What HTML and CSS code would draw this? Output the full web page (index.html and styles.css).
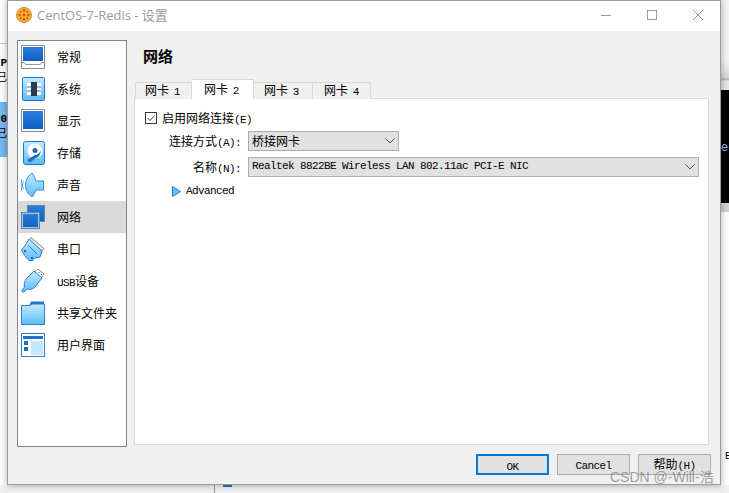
FILE: index.html
```html
<!DOCTYPE html>
<html lang="en">
<head>
  <meta charset="UTF-8">
  <title>CentOS-7-Redis - 设置</title>
  <link rel="stylesheet" href="styles.css">
</head>
<body>

  <svg class="defs" width="0" height="0">
    <defs>
      <linearGradient id="pale" x1="0" y1="0" x2="0" y2="1">
        <stop offset="0" stop-color="#c4eaff"/>
        <stop offset="1" stop-color="#5cbcf8"/>
      </linearGradient>
      <linearGradient id="deep" x1="0" y1="0" x2="0" y2="1">
        <stop offset="0" stop-color="#2a7fdc"/>
        <stop offset="1" stop-color="#0f5fc4"/>
      </linearGradient>
    </defs>
  </svg>

  <!-- what shows behind the dialog -->
  <div class="back back-top"></div>
  <div class="back back-list">
    <b>P</b>
    <span>已</span>
  </div>
  <div class="back back-sel">
    <b>0</b>
    <span>已</span>
  </div>
  <div class="back back-right"></div>
  <div class="back back-term">ec</div>
  <div class="back back-e">E</div>
  <div class="back back-bottom"><i></i></div>

  <div class="window">
    <header class="titlebar">
      <svg class="app-icon" width="16" height="16" viewBox="0 0 16 16">
        <circle cx="8" cy="8" r="7.5" fill="#f8b133" stroke="#d9822b"/>
        <g fill="#c8501e">
          <circle cx="8" cy="3.5" r="1.2"/><circle cx="8" cy="12.5" r="1.2"/>
          <circle cx="3.5" cy="8" r="1.2"/><circle cx="12.5" cy="8" r="1.2"/>
          <circle cx="8" cy="8" r="1.4"/>
          <circle cx="4.8" cy="4.8" r="1"/><circle cx="11.2" cy="4.8" r="1"/>
          <circle cx="4.8" cy="11.2" r="1"/><circle cx="11.2" cy="11.2" r="1"/>
        </g>
      </svg>
      <span class="title">CentOS-7-Redis - 设置</span>
      <div class="controls">
        <svg width="12" height="12" viewBox="0 0 12 12"><path d="M1 6.5h10" stroke="#999" fill="none"/></svg>
        <svg width="12" height="12" viewBox="0 0 12 12"><rect x="1.5" y="1.5" width="9" height="9" stroke="#999" fill="none"/></svg>
        <svg width="12" height="12" viewBox="0 0 12 12"><path d="M1 1l10 10M11 1L1 11" stroke="#999" fill="none"/></svg>
      </div>
    </header>

    <div class="main">
      <ul class="sidebar">
        <li class="item">
          <svg class="icon" width="24" height="24" viewBox="0 0 24 24">
            <path d="M.5.5h23v17l0 6H.5z" fill="#fff" stroke="#8a8a8a"/>
            <rect x="2" y="2" width="20" height="14" fill="url(#deep)"/>
            <path d="M.5 17.5h3l1 2h15l1-2h3" fill="none" stroke="#9a9a9a"/>
          </svg>
          <span>常规</span>
        </li>
        <li class="item">
          <svg class="icon" width="24" height="24" viewBox="0 0 24 24">
            <rect x="1.5" y=".5" width="22" height="23" rx="1" fill="url(#pale)" stroke="#1f74cc"/>
            <rect x="6" y="6" width="14" height="12" fill="#fff"/>
            <path d="M6 10h14M6 14h14" stroke="#2a7fdc"/>
            <rect x="10" y="5" width="6" height="14" fill="#2c3a4d"/>
          </svg>
          <span>系统</span>
        </li>
        <li class="item">
          <svg class="icon" width="24" height="24" viewBox="0 0 24 24">
            <path d="M.5.5h23v22H.5z" fill="#fff" stroke="#8a8a8a"/>
            <rect x="2" y="2" width="20" height="18" fill="url(#deep)"/>
          </svg>
          <span>显示</span>
        </li>
        <li class="item">
          <svg class="icon" width="24" height="24" viewBox="0 0 24 24">
            <rect x="2.5" y=".5" width="21" height="23" rx="2" fill="url(#pale)" stroke="#1f74cc"/>
            <circle cx="14" cy="10" r="7.5" fill="#fff"/>
            <circle cx="14" cy="9.5" r="2.5" fill="#2266b5"/>
            <path d="M6 19l8-5c3-.5 5-2 6-5-.5 5-2.500 7.500-6 8.500l-5 4z" fill="#1f6cc4"/>
          </svg>
          <span>存储</span>
        </li>
        <li class="item">
          <svg class="icon" width="24" height="26" viewBox="0 0 24 26">
            <path d="M2.500 9.500c-1.500 2.500-1.500 5 0 7.500M.8 7.500c-1 4-1 7 0 11" fill="none" stroke="#3a94e6"/>
            <path d="M11 1C7 4 4.500 8 4.500 13S7 22 11 25c1.500-2 3-4 4-7h7.500V9H15c-1-3-2.500-6-4-8z" fill="url(#pale)" stroke="#2a8ae0"/>
          </svg>
          <span>声音</span>
        </li>
        <li class="item active">
          <svg class="icon" width="24" height="24" viewBox="0 0 24 24">
            <rect x="6.500" y=".5" width="17" height="16" fill="url(#deep)" stroke="#5b86ad"/>
            <rect x=".5" y="7.500" width="18" height="16" fill="url(#deep)" stroke="#5b86ad"/>
            <rect x="1.500" y="8.500" width="16" height="14" fill="none" stroke="#a9c8e6"/>
          </svg>
          <span>网络</span>
        </li>
        <li class="item">
          <svg class="icon" width="24" height="24" viewBox="0 0 24 24">
            <path d="M10 .5l13 11-2 2.500L8 3z" fill="#e8e8e8" stroke="#8a8a8a"/>
            <path d="M8 2l13 12-2 6-4 1c-1.500 0-2.500 1-3 2.500H8C6.500 22 5 20 3.500 18.500L.5 13C3 10 6 6 8 2z" fill="url(#pale)" stroke="#2a82da"/>
            <path d="M7 8l9 9" stroke="#2a82da"/>
            <circle cx="4" cy="14" r="1.200" fill="#1f6cc4"/><circle cx="11" cy="21" r="1.200" fill="#1f6cc4"/>
          </svg>
          <span>串口</span>
        </li>
        <li class="item">
          <svg class="icon" width="24" height="24" viewBox="0 0 24 24">
            <path d="M14 3l3-3 6 5-3 4z" fill="#fff" stroke="#8a8a8a"/>
            <path d="M17.500 3l1 1M20 5l1 1" stroke="#555"/>
            <path d="M13 2l8 7-7 9c-2 2-5 3-8 2l-3 3H1.500L.8 21.500 3.500 18C3 15 3.500 12 5 10z" fill="url(#pale)" stroke="#2a82da"/>
          </svg>
          <span><span class="lat">USB</span>设备</span>
        </li>
        <li class="item">
          <svg class="icon" width="24" height="24" viewBox="0 0 24 24">
            <path d="M10 .5h13v5H8z" fill="#2272cc"/>
            <path d="M.5 4.500H9l2-1.500h12.500v20.500H.5z" fill="url(#pale)" stroke="#2a82da"/>
          </svg>
          <span>共享文件夹</span>
        </li>
        <li class="item">
          <svg class="icon" width="24" height="24" viewBox="0 0 24 24">
            <rect x=".5" y=".5" width="23" height="23" fill="#fff" stroke="#2a82da"/>
            <rect x="2" y="3" width="20" height="3" fill="#2272cc"/>
            <rect x="3" y="8" width="4" height="4" fill="#1f6cc4"/>
            <rect x="3" y="14" width="4" height="4" fill="#1f6cc4"/>
            <rect x="10" y="8" width="12" height="14" fill="#c4e8fb"/>
          </svg>
          <span>用户界面</span>
        </li>
      </ul>

      <section class="pane">
        <h1 class="heading">网络</h1>
        <div class="tabs">
          <div class="tab t1">网卡 <span class="lat">1</span></div>
          <div class="tab t2 selected">网卡 <span class="lat">2</span></div>
          <div class="tab t3">网卡 <span class="lat">3</span></div>
          <div class="tab t4">网卡 <span class="lat">4</span></div>
        </div>
        <div class="panel">
          <label class="check">
            <svg width="12" height="12" viewBox="0 0 12 12">
              <rect x=".5" y=".5" width="11" height="11" fill="#fff" stroke="#333"/>
              <path d="M2.500 6l2.500 2.500 4.500-5" fill="none" stroke="#444"/>
            </svg>
            <span>启用网络连接<span class="lat">(E)</span></span>
          </label>
          <div class="fields">
            <span class="field-label">连接方式<span class="lat">(A):</span></span>
            <div class="combo short">
              <span>桥接网卡</span>
              <svg width="10" height="6" viewBox="0 0 10 6"><path d="M.5.500L5 5 9.500.5" fill="none" stroke="#555"/></svg>
            </div>
            <span class="field-label">名称<span class="lat">(N):</span></span>
            <div class="combo">
              <span class="lat">Realtek 8822BE Wireless LAN 802.11ac PCI-E NIC</span>
              <svg width="10" height="6" viewBox="0 0 10 6"><path d="M.5.500L5 5 9.500.5" fill="none" stroke="#555"/></svg>
            </div>
          </div>
          <div class="advanced">
            <svg width="9" height="11" viewBox="0 0 9 11"><path d="M.5.500l8 5-8 5z" fill="#6cc0f5" stroke="#1f7cd6"/></svg>
            <span class="lat">Advanced</span>
          </div>
        </div>
      </section>
    </div>

    <footer class="buttons">
      <button class="btn primary"><span class="lat">OK</span></button>
      <button class="btn"><span class="lat">Cancel</span></button>
      <button class="btn">帮助<span class="lat">(H)</span></button>
    </footer>
  </div>

  <div class="watermark">CSDN @-Will-浩</div>

</body>
</html>
```

FILE: styles.css
```css
* {
  box-sizing: border-box;
}
html, body {
  margin: 0;
  height: 100%;
}
body {
  position: relative;
  width: 729px;
  height: 493px;
  overflow: hidden;
  background-color: #fff;
  color: #000;
  font-family: "Noto Sans CJK SC", sans-serif;
  font-size: 12px;
}
.defs {
  position: absolute;
}
.lat {
  font-family: "Liberation Mono", monospace;
  font-size: 11px;
  letter-spacing: -0.6px;
}

/* behind the dialog */
.back {
  position: absolute;
  overflow: hidden;
}
.back-top {
  left: 0;
  top: 43px;
  width: 7px;
  height: 1px;
  background-color: #ccc;
}
.back-list, .back-sel {
  left: 0;
  width: 7px;
  font-size: 11px;
  line-height: 15px;
  display: flex;
  flex-direction: column;
  align-items: flex-end;
  font-family: "Liberation Mono", "Noto Sans CJK SC", monospace;
  white-space: nowrap;
}
.back-list {
  top: 56px;
  height: 30px;
}
.back-sel {
  top: 102px;
  height: 55px;
  padding-top: 10px;
  background-color: #7ab9f0;
}
.back-right {
  right: 0;
  top: 0;
  width: 8px;
  height: 212px;
  background: linear-gradient(180deg, #f4f4f4 0, #f4f4f4 60px, #d8d8d8 78px, #aaa 79px, #e6e6e6 81px, #e6e6e6 90px, #000 90px, #000 203px, #d2d2d2 203px, #d2d2d2 212px);
}
.back-term {
  right: 0;
  top: 141px;
  width: 8px;
  color: #9ccaf5;
  font-family: "Liberation Mono", monospace;
  font-size: 12px;
  line-height: 14px;
  white-space: nowrap;
}
.back-e {
  right: 0;
  top: 451px;
  width: 4px;
  font-family: "Liberation Mono", monospace;
  font-size: 10px;
  line-height: 12px;
  overflow: hidden;
}
.back-bottom {
  left: 0;
  right: 0;
  top: 485px;
  height: 8px;
  background-color: #f0f0f0;
  > i {
    position: absolute;
    left: 214px;
    top: 0;
    width: 1px;
    height: 8px;
    background-color: #999;
  }
}
.back-bottom::after {
  content: "";
  position: absolute;
  left: 223px;
  top: 0;
  width: 9px;
  height: 2px;
  background-color: #2a6fc4;
}

/* dialog */
.window {
  position: absolute;
  left: 7px;
  top: 0;
  width: 714px;
  height: 485px;
  display: flex;
  flex-direction: column;
  background-color: #f0f0f0;
  border: 1px solid #9c9c9c;
  box-shadow: 0 0 7px rgba(0, 0, 0, 0.35);
}
.titlebar {
  height: 30px;
  flex: none;
  display: flex;
  align-items: center;
  padding: 0 0 2px 8px;
  background-color: #fff;
}
.app-icon {
  flex: none;
}
.title {
  margin-left: 5px;
  padding-bottom: 1px;
  color: #999;
  font-family: "Open Sans", "Noto Sans CJK SC", sans-serif;
  font-size: 13px;
}
.controls {
  margin-left: auto;
  margin-right: 16px;
  display: flex;
  gap: 34px;
}

.main {
  flex: 1;
  min-height: 0;
  display: flex;
  gap: 7px;
  padding: 9px 11px 0 9px;
}
.sidebar {
  width: 110px;
  flex: none;
  list-style: none;
  margin: 0;
  padding: 0;
  background-color: #fff;
  border: 1px solid #80868d;
}
.item {
  height: 32px;
  display: flex;
  align-items: center;
  gap: 12px;
  padding-left: 3px;
  > span {
    padding-bottom: 2px;
  }
  &.active {
    background-color: #d9d9d9;
  }
}
.icon {
  flex: none;
}

.pane {
  flex: 1;
  min-width: 0;
  display: flex;
  flex-direction: column;
  margin-bottom: 2px;
}
.heading {
  height: 39px;
  flex: none;
  margin: 0;
  padding-left: 9px;
  font-size: 15px;
  font-weight: 700;
  line-height: 32px;
}
.tabs {
  display: flex;
  height: 20px;
  flex: none;
  padding-left: 1px;
  margin-bottom: -1px;
  position: relative;
}
.tab {
  margin-top: 3px;
  padding-left: 9px;
  line-height: 14px;
  background-color: #f0f0f0;
  border: 1px solid #d9d9d9;
  border-left-width: 0;
  border-bottom-width: 0;
  white-space: nowrap;
  .lat {
    margin-left: 2px;
  }
  &.t1 {
    width: 57px;
    border-left-width: 1px;
  }
  &.t2 {
    width: 62px;
    padding-left: 12px;
  }
  &.t3 {
    width: 59px;
    padding-left: 10px;
  }
  &.t4 {
    width: 58px;
    padding-left: 11px;
  }
  &.selected {
    margin-top: 0;
    line-height: 18px;
    background-color: #fff;
  }
}
.panel {
  flex: 1;
  padding: 13px 9px 0 10px;
  background-color: #fff;
  border: 1px solid #d9d9d9;
}
.check {
  display: flex;
  align-items: center;
  gap: 5px;
  height: 12px;
  > span {
    padding-bottom: 2px;
  }
}
.fields {
  display: grid;
  grid-template-columns: 96px 1fr;
  grid-auto-rows: 20px;
  column-gap: 7px;
  row-gap: 6px;
  margin-top: 7px;
  align-items: center;
}
.field-label {
  text-align: right;
  padding-bottom: 2px;
}
.combo {
  height: 20px;
  display: flex;
  align-items: center;
  justify-content: space-between;
  padding: 0 3px;
  background-color: #e1e1e1;
  border: 1px solid #adadad;
  > span {
    padding-bottom: 2px;
  }
  &.short {
    width: 151px;
  }
  svg {
    flex: none;
  }
}
.advanced {
  display: flex;
  align-items: center;
  gap: 5px;
  height: 12px;
  margin: 8px 0 0 27px;
}

.buttons {
  flex: none;
  height: 37px;
  display: flex;
  justify-content: flex-end;
  gap: 8px;
  padding: 7px 9px 9px 0;
}
.btn {
  width: 73px;
  padding: 0 0 2px;
  background-color: #e1e1e1;
  border: 1px solid #adadad;
  color: #000;
  font: inherit;
  &.primary {
    border: 2px solid #0078d7;
  }
}

.watermark {
  position: absolute;
  left: 610px;
  top: 467px;
  color: rgba(110, 110, 110, 0.65);
  font-family: "Liberation Sans", "Noto Sans CJK SC", sans-serif;
  font-size: 14px;
  line-height: 20px;
  white-space: nowrap;
}
```
